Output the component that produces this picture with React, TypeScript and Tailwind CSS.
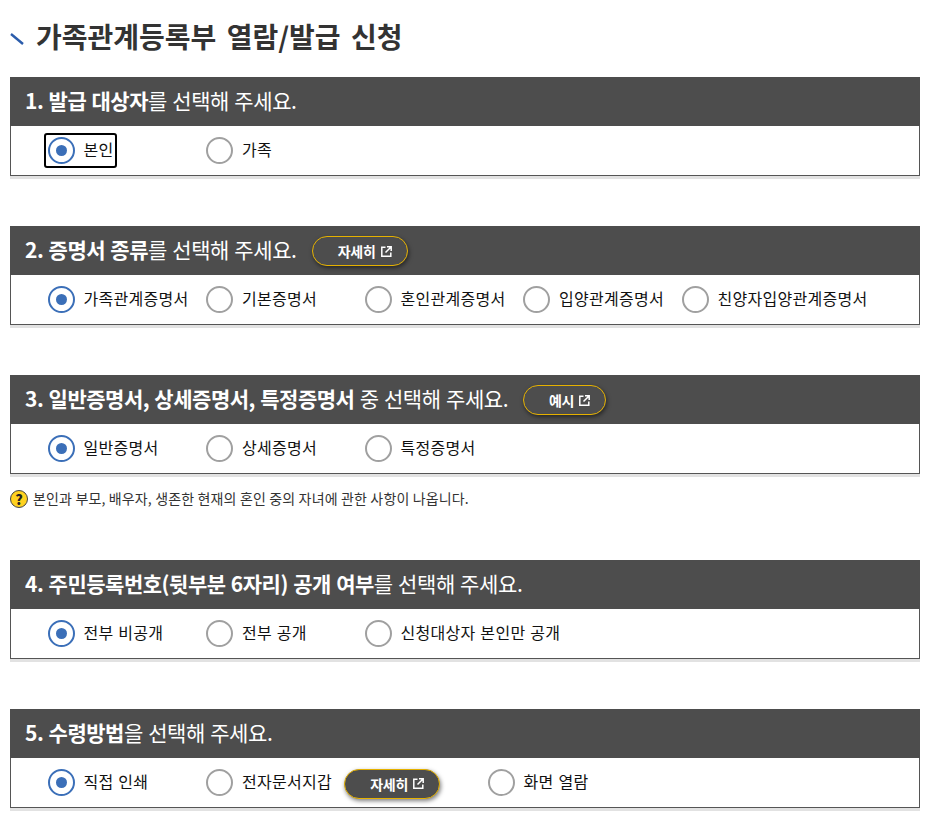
import type { ReactNode } from 'react';

const FONT = "font-['Noto_Sans_CJK_KR','Noto_Sans',sans-serif]";

function ExternalIcon() {
  return (
    <svg width="11" height="11" viewBox="0 0 11 11" fill="none" stroke="#fff" strokeWidth="1.5" className="shrink-0">
      <path d="M4.5 1.2H.8v9h9V6.5" />
      <path d="M4.5 6.5l5-5M6 .8h4.2V5" />
    </svg>
  );
}

function DetailButton({ label, wide, dark }: { label: string; wide?: boolean; dark?: boolean }) {
  return (
    <span
      className={`inline-flex h-[30px] items-center justify-end gap-[5px] rounded-full border-[#e5b100] pr-[15px] text-[14px] font-bold leading-none tracking-[-0.3px] text-white shadow-[1px_2px_4px_rgba(0,0,0,0.5)] ${
        wide ? 'w-[83px]' : 'w-[96px]'
      } ${dark ? 'border-[1.5px] bg-[#4d4d4d]' : 'border bg-transparent'}`}
    >
      {label}
      <ExternalIcon />
    </span>
  );
}

function Radio({ label, checked, focus, className }: { label: string; checked?: boolean; focus?: boolean; className?: string }) {
  return (
    <label className={`relative flex h-[50px] items-center gap-[8.5px] ${className ?? 'w-[158.5px]'}`}>
      {focus && <span className="absolute left-[-4px] top-[7px] h-[35px] w-[73px] rounded-[3px] border-2 border-black" />}
      <span
        className={`flex h-[27px] w-[27px] shrink-0 items-center justify-center rounded-full border-2 bg-white ${
          checked ? 'border-[#3b6fb8]' : 'border-[#a0a0a0]'
        }`}
      >
        {checked && <span className="h-[11px] w-[11px] rounded-full bg-[#3b6fb8]" />}
      </span>
      <span className="mb-[3px] whitespace-nowrap text-[16px] font-normal tracking-[0.3px] text-[#111] [word-spacing:1px]">{label}</span>
    </label>
  );
}

function Section({ title, rest, button, children, className }: { title: string; rest: string; button?: ReactNode; children: ReactNode; className?: string }) {
  return (
    <section className={`shadow-[0_3px_0_#e2e2e2] ${className ?? ''}`}>
      <h2 className="flex h-[49px] items-center bg-[#4d4d4d] pl-[15px] text-[21px] font-normal tracking-[-0.4px] text-white">
        <span className="mb-[2px] whitespace-pre [word-spacing:1px]">
          <b className="font-bold tracking-[-0.48px]">{title}</b>
          {rest}
        </span>
        {button && <span className="ml-[15px] mt-[1px] flex">{button}</span>}
      </h2>
      <div className="flex h-[50px] items-center border-x border-b border-[#555] bg-white pl-[36.9px]">{children}</div>
    </section>
  );
}

export default function App() {
  return (
    <div className={`h-[815px] w-[927px] overflow-hidden bg-white pl-[10px] ${FONT}`}>
      <div className="w-[910px]">
        <h1 className="flex h-[77px] items-center pb-[5px] text-[28px] font-bold text-[#333] [word-spacing:4px]">
          <svg width="14" height="12" viewBox="0 0 14 12" className="mr-[12px] mt-[5px] shrink-0">
            <path d="M1 1l12 10" stroke="#2b5cab" strokeWidth="2.4" />
          </svg>
          가족관계등록부 열람/발급 신청
        </h1>

        <Section title="1. 발급 대상자" rest="를 선택해 주세요." className="mb-[50px]">
          <Radio label="본인" checked focus />
          <Radio label="가족" />
        </Section>

        <Section title="2. 증명서 종류" rest="를 선택해 주세요." button={<DetailButton label="자세히" />} className="mb-[50px]">
          <Radio label="가족관계증명서" checked />
          <Radio label="기본증명서" />
          <Radio label="혼인관계증명서" />
          <Radio label="입양관계증명서" />
          <Radio label="친양자입양관계증명서" />
        </Section>

        <Section title="3. 일반증명서, 상세증명서, 특정증명서" rest=" 중 선택해 주세요." button={<DetailButton label="예시" wide />}>
          <Radio label="일반증명서" checked />
          <Radio label="상세증명서" />
          <Radio label="특정증명서" />
        </Section>
        <p className="mb-[51px] mt-[14px] flex h-[21px] items-center gap-[5px] text-[14px] tracking-[0.15px] text-[#333]">
          <span className="flex h-[18px] w-[18px] items-center justify-center rounded-full border border-[#444] bg-[#ffd21f] text-[14px] font-black leading-none text-[#222]">?</span>
          본인과 부모, 배우자, 생존한 현재의 혼인 중의 자녀에 관한 사항이 나옵니다.
        </p>

        <Section title="4. 주민등록번호(뒷부분 6자리) 공개 여부" rest="를 선택해 주세요." className="mb-[50px]">
          <Radio label="전부 비공개" checked />
          <Radio label="전부 공개" />
          <Radio label="신청대상자 본인만 공개" />
        </Section>

        <Section title="5. 수령방법" rest="을 선택해 주세요.">
          <Radio label="직접 인쇄" checked />
          <Radio label="전자문서지갑" className="w-auto" />
          <span className="ml-[12px] mr-[48px] mt-[2px] flex">
            <DetailButton label="자세히" dark />
          </span>
          <Radio label="화면 열람" />
        </Section>
      </div>
    </div>
  );
}
